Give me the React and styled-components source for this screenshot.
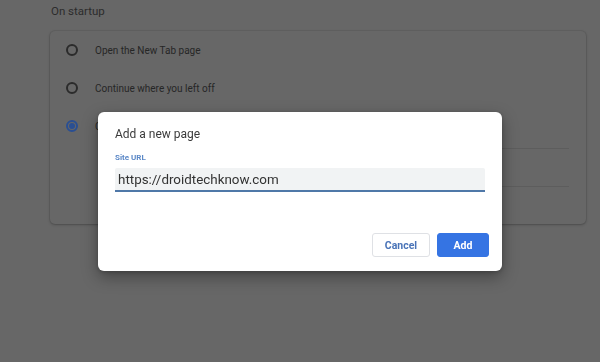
import React from "react";
import styled, { createGlobalStyle } from "styled-components";

const Global = createGlobalStyle`
  html, body { margin: 0; padding: 0; }
  body {
    background: #676767;
    font-family: Roboto, "Liberation Sans", Arial, sans-serif;
    width: 600px;
    height: 362px;
    overflow: hidden;
  }
`;

const Page = styled.div`
  padding: 4px 15px 0 50px;
`;

const SectionTitle = styled.div`
  font-size: 11.5px;
  line-height: 15px;
  color: #2c2c2c;
  padding-left: 1px;
  height: 27px;
`;

const Card = styled.div`
  width: 536px;
  height: 193px;
  background: #676767;
  border-radius: 5px;
  box-shadow: 0 0 0 1px rgba(0, 0, 0, 0.06), 0 1px 3px rgba(0, 0, 0, 0.22);
  display: flex;
  flex-direction: column;
`;

const Row = styled.div`
  height: 38px;
  display: flex;
  align-items: center;
  padding-left: 16px;
  gap: 17px;
  font-size: 10px;
  color: #262626;
`;

const Radio = styled.span`
  width: 12px;
  height: 12px;
  box-sizing: border-box;
  border-radius: 50%;
  border: 2px solid ${(p) => (p.$checked ? "#2a4f93" : "#2b2b2b")};
  display: flex;
  align-items: center;
  justify-content: center;
  flex-shrink: 0;
  &::after {
    content: "";
    width: 6px;
    height: 6px;
    border-radius: 50%;
    background: ${(p) => (p.$checked ? "#2a4f93" : "transparent")};
  }
`;

const SubList = styled.div`
  margin-top: 3px;
  padding: 0 17px 0 60px;
`;

const SubRow = styled.div`
  height: 38px;
  border-top: 1px solid #5d5d5d;
  box-sizing: border-box;
`;

const Overlay = styled.div`
  position: fixed;
  inset: 0;
  display: flex;
  justify-content: center;
  align-items: flex-start;
  padding-top: 112px;
`;

const Dialog = styled.div`
  width: 404px;
  height: 159px;
  box-sizing: border-box;
  background: #ffffff;
  border-radius: 6px;
  box-shadow: 0 6px 16px rgba(0, 0, 0, 0.35), 0 1px 4px rgba(0, 0, 0, 0.2);
  padding: 15px 17px 14px 17px;
  display: flex;
  flex-direction: column;
`;

const Title = styled.div`
  font-size: 12px;
  line-height: 15px;
  color: #3a3a3a;
`;

const Label = styled.div`
  margin-top: 11px;
  font-size: 8px;
  font-weight: 700;
  line-height: 10px;
  color: #5b88c7;
`;

const Input = styled.div`
  margin-top: 5px;
  height: 24px;
  box-sizing: border-box;
  background: #f1f3f4;
  border-bottom: 2px solid #4f78a8;
  border-radius: 2px 2px 0 0;
  padding: 0 3px;
  display: flex;
  align-items: center;
  font-size: 13.4px;
  color: #333333;
`;

const Actions = styled.div`
  margin-top: auto;
  margin-right: -4px;
  display: flex;
  justify-content: flex-end;
  gap: 7px;
`;

const Button = styled.button`
  height: 24px;
  width: ${(p) => (p.$primary ? "52px" : "58px")};
  box-sizing: border-box;
  border-radius: 3px;
  border: 1px solid ${(p) => (p.$primary ? "#3574e3" : "#dfe1e5")};
  background: ${(p) => (p.$primary ? "#3574e3" : "#ffffff")};
  color: ${(p) => (p.$primary ? "#ffffff" : "#4a74b8")};
  font-family: Roboto, "Liberation Sans", Arial, sans-serif;
  font-size: 10.5px;
  font-weight: 700;
  padding: 0;
`;

export default function App() {
  return (
    <>
      <Global />
      <Page>
        <SectionTitle>On startup</SectionTitle>
        <Card>
          <Row>
            <Radio />
            Open the New Tab page
          </Row>
          <Row>
            <Radio />
            Continue where you left off
          </Row>
          <Row>
            <Radio $checked />
            Open a specific page or set of pages
          </Row>
          <SubList>
            <SubRow />
            <SubRow />
          </SubList>
        </Card>
      </Page>
      <Overlay>
        <Dialog>
          <Title>Add a new page</Title>
          <Label>Site URL</Label>
          <Input>https://droidtechknow.com</Input>
          <Actions>
            <Button>Cancel</Button>
            <Button $primary>Add</Button>
          </Actions>
        </Dialog>
      </Overlay>
    </>
  );
}
